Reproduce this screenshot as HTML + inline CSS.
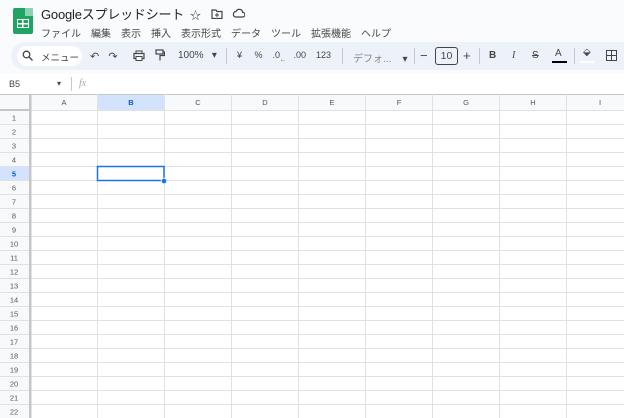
<!DOCTYPE html><html><head><meta charset="utf-8"><style>
*{margin:0;padding:0;box-sizing:border-box}
body{width:624px;height:418px;overflow:hidden;background:#f9fbfd;font-family:"Liberation Sans","Noto Sans CJK JP",sans-serif;position:relative;color:#444746}
.a{position:absolute}
.t{font-size:10px;color:#444746;white-space:nowrap}
.m{position:absolute;top:25px;font-size:10px;color:#444746;white-space:nowrap}
</style></head><body>
<div class="a" style="left:13px;top:8px;width:20px;height:26px;background:#1fa463;border-radius:2px"></div>
<div class="a" style="left:25px;top:8px;width:8px;height:8px;background:#8ed1b1"></div>
<div class="a" style="left:17px;top:19px;width:12px;height:9px;border:1.5px solid #fff;background:linear-gradient(#fff,#fff) center/1.5px 100% no-repeat,linear-gradient(#fff,#fff) center/100% 1.5px no-repeat"></div>
<div class="a" style="left:41px;top:4px;font-size:13px;letter-spacing:-0.2px;color:#1f1f1f">Googleスプレッドシート</div>
<div class="a t" style="left:190px;top:7px;font-size:11px">☆</div>
<svg class="a" style="left:211px;top:9px" width="12" height="10"><path d="M1 1h4l1 1.5h5v7H1z" fill="none" stroke="#444" stroke-width="1.2"/><path d="M6 4v4M4 6h4" stroke="#444"/></svg>
<svg class="a" style="left:232px;top:8px" width="13" height="10"><path d="M3.5 9h7a2.3 2.3 0 0 0 .2-4.6A3.5 3.5 0 0 0 4 3.5 2.8 2.8 0 0 0 3.5 9z" fill="none" stroke="#444" stroke-width="1.2"/></svg>
<span class="m" style="left:41px">ファイル</span>
<span class="m" style="left:91px">編集</span>
<span class="m" style="left:121px">表示</span>
<span class="m" style="left:151px">挿入</span>
<span class="m" style="left:181px">表示形式</span>
<span class="m" style="left:231px">データ</span>
<span class="m" style="left:271px">ツール</span>
<span class="m" style="left:311px">拡張機能</span>
<span class="m" style="left:361px">ヘルプ</span>
<div class="a" style="left:11px;top:42px;width:640px;height:28px;background:#edf2fa;border-radius:14px"></div>
<div class="a" style="left:17px;top:46px;width:65px;height:20px;background:#fff;border-radius:10px"></div>
<svg class="a" style="left:22px;top:50px" width="11" height="11"><circle cx="4.5" cy="4.5" r="3.3" fill="none" stroke="#444" stroke-width="1.3"/><path d="M7 7l3.5 3.5" stroke="#444" stroke-width="1.3"/></svg>
<div class="a t" style="left:41px;top:50px;font-size:9.5px">メニュー</div>
<div class="a t" style="left:90px;top:50px;font-size:11px">↶&nbsp;&nbsp;&nbsp;↷</div>
<svg class="a" style="left:133px;top:50px" width="12" height="11"><rect x="1" y="3.5" width="10" height="5" fill="none" stroke="#444" stroke-width="1.2"/><rect x="3" y="1" width="6" height="2.5" fill="none" stroke="#444"/><rect x="3" y="6.5" width="6" height="4" fill="#fff" stroke="#444"/></svg>
<svg class="a" style="left:155px;top:49px" width="10" height="13"><rect x="1" y="1" width="7" height="4" fill="none" stroke="#444" stroke-width="1.2"/><path d="M8 3h1.5v3.5H5v5" fill="none" stroke="#444" stroke-width="1.2"/></svg>
<div class="a t" style="left:178px;top:50px">100%&nbsp;&nbsp;&nbsp;▾</div>
<div class="a" style="left:226px;top:48px;width:1px;height:16px;background:#c7c7c7"></div>
<div class="a t" style="left:237px;top:50px;font-size:9px">¥&nbsp;&nbsp;&nbsp;&nbsp;&nbsp;%&nbsp;&nbsp;&nbsp;&nbsp;.0<sub style="font-size:6px">←</sub>&nbsp;&nbsp;&nbsp;.00&nbsp;&nbsp;&nbsp;&nbsp;123</div>
<div class="a" style="left:342px;top:48px;width:1px;height:16px;background:#c7c7c7"></div>
<div class="a t" style="left:353px;top:50px;color:#80868b">デフォ...&nbsp;&nbsp;&nbsp;&nbsp;<span style="color:#444">▾</span></div>
<div class="a" style="left:414px;top:48px;width:1px;height:16px;background:#c7c7c7"></div>
<div class="a t" style="left:420px;top:48px;font-size:13px">−</div>
<div class="a" style="left:435px;top:47px;width:23px;height:18px;border:1px solid #444;border-radius:3px;font-size:10.5px;text-align:center;line-height:16px">10</div>
<div class="a t" style="left:463px;top:48px;font-size:13px">+</div>
<div class="a" style="left:479px;top:48px;width:1px;height:16px;background:#c7c7c7"></div>
<div class="a t" style="left:489px;top:50px;font-weight:bold">B</div>
<div class="a t" style="left:512px;top:50px;font-style:italic;font-family:'Liberation Serif'">I</div>
<div class="a t" style="left:532px;top:50px;text-decoration:line-through">S</div>
<div class="a t" style="left:555px;top:48px">A</div>
<div class="a" style="left:552px;top:61px;width:15px;height:2px;background:#000"></div>
<div class="a" style="left:574px;top:48px;width:1px;height:16px;background:#c7c7c7"></div>
<div class="a t" style="left:583px;top:47px;font-size:10px">⬙</div>
<div class="a" style="left:580px;top:61px;width:15px;height:2px;background:#fff"></div>
<svg class="a" style="left:606px;top:50px" width="11" height="11"><rect x=".5" y=".5" width="10" height="10" fill="none" stroke="#444"/><path d="M5.5 0v11M0 5.5h11" stroke="#444"/></svg>
<div class="a" style="left:0;top:74px;width:624px;height:20px;background:#fff"></div>
<div class="a t" style="left:9px;top:79px;font-size:9px">B5</div>
<div class="a t" style="left:57px;top:79px;font-size:8px">▾</div>
<div class="a" style="left:71px;top:77px;width:1px;height:14px;background:#c7c7c7"></div>
<div class="a t" style="left:79px;top:78px;font-size:10px;color:#aaa;font-style:italic;font-family:'Liberation Serif'">fx</div>
<svg class="a" style="left:0;top:94px" width="624" height="324">
<rect x="0" y="0" width="624" height="324" fill="#fff"/>
<rect x="0" y="0" width="624" height="16" fill="#f8f9fa"/>
<rect x="0" y="0" width="30" height="324" fill="#f8f9fa"/>
<rect x="98" y="0" width="66" height="16" fill="#d3e3fd"/>
<rect x="0" y="73" width="30" height="13" fill="#d3e3fd"/>
<line x1="0" y1="0.5" x2="624" y2="0.5" stroke="#c4c7c5"/>
<g stroke="#e1e1e1">
<path d="M0 16.5H624M0 30.5H624M0 44.5H624M0 58.5H624M0 72.5H624M0 86.5H624M0 100.5H624M0 114.5H624M0 128.5H624M0 142.5H624M0 156.5H624M0 170.5H624M0 184.5H624M0 198.5H624M0 212.5H624M0 226.5H624M0 240.5H624M0 254.5H624M0 268.5H624M0 282.5H624M0 296.5H624M0 310.5H624"/>
<path d="M97.5 0V324M164.5 0V324M231.5 0V324M298.5 0V324M365.5 0V324M432.5 0V324M499.5 0V324M566.5 0V324"/>
</g>
<rect x="29" y="0" width="2.5" height="324" fill="#c4c7c5"/>
<rect x="0" y="15" width="30" height="2" fill="#c4c7c5"/>
<rect x="97.5" y="72.5" width="66.5" height="14" fill="none" stroke="#1a73e8" stroke-width="1.5"/>
<circle cx="164" cy="87" r="2.8" fill="#1a73e8" stroke="#fff" stroke-width="0.8"/>
<g font-family="Liberation Sans" font-size="7.5" fill="#555" text-anchor="middle">
<text x="64" y="11">A</text><text x="131" y="11" font-weight="bold" fill="#0b57d0">B</text><text x="198" y="11">C</text><text x="265" y="11">D</text><text x="332" y="11">E</text><text x="399" y="11">F</text><text x="466" y="11">G</text><text x="533" y="11">H</text><text x="600" y="11">I</text>
<text x="14" y="26.5">1</text><text x="14" y="40.5">2</text><text x="14" y="54.5">3</text><text x="14" y="68.5">4</text><text x="14" y="82.5" font-weight="bold" fill="#0b57d0">5</text><text x="14" y="96.5">6</text><text x="14" y="110.5">7</text><text x="14" y="124.5">8</text><text x="14" y="138.5">9</text><text x="14" y="152.5">10</text><text x="14" y="166.5">11</text><text x="14" y="180.5">12</text><text x="14" y="194.5">13</text><text x="14" y="208.5">14</text><text x="14" y="222.5">15</text><text x="14" y="236.5">16</text><text x="14" y="250.5">17</text><text x="14" y="264.5">18</text><text x="14" y="278.5">19</text><text x="14" y="292.5">20</text><text x="14" y="306.5">21</text><text x="14" y="320.5">22</text>
</g>
</svg>
</body></html>
